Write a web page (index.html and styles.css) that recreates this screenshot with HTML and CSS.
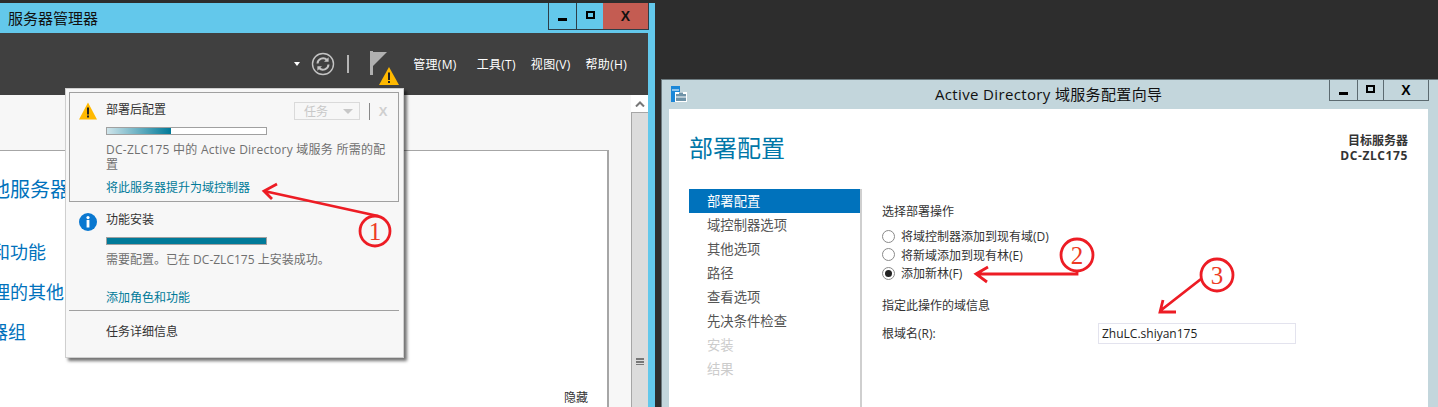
FILE: index.html
```html
<!DOCTYPE html>
<html lang="zh-CN">
<head>
  <meta charset="UTF-8">
  <title>服务器管理器</title>
  <link rel="stylesheet" href="styles.css">
</head>
<body>
  <!-- server manager window -->
  <div class="win win-left">
    <div class="titlebar">
      <div class="title">服务器管理器</div>
      <div class="win-btns">
        <div class="win-btn btn-min"><span class="glyph-min"></span></div>
        <div class="win-btn btn-max"><span class="glyph-max"></span></div>
        <div class="win-btn btn-close">X</div>
      </div>
    </div>
    <div class="toolbar">
      <span class="drop-arrow"></span>
      <svg class="refresh" width="24" height="24" viewBox="0 0 24 24" fill="none" stroke="#c4c4c4">
        <circle cx="12" cy="12" r="10.5" stroke-width="1.4"/>
        <path d="M6.5 11.5a5.5 5.5 0 0 1 9.5-3.5" stroke-width="2"/>
        <path d="M17.5 12.5a5.5 5.5 0 0 1-9.5 3.5" stroke-width="2"/>
        <path d="M17.6 5.2v4.6h-4.6z" fill="#c4c4c4" stroke="none"/>
        <path d="M6.4 18.8v-4.6h4.6z" fill="#c4c4c4" stroke="none"/>
      </svg>
      <span class="tool-sep"></span>
      <span class="flag-wrap">
        <svg width="30" height="36" viewBox="0 0 30 36">
          <rect x="1" y="0" width="3" height="24" fill="#b0b0b0"/>
          <path d="M4 1H18L4 15z" fill="#b0b0b0"/>
          <path d="M20 16L30 34H10z" fill="#ffb900"/>
          <rect x="19" y="21.5" width="2" height="7.5" fill="#222"/>
          <rect x="19" y="30" width="2" height="2" fill="#222"/>
        </svg>
      </span>
      <nav class="menu">
        <span class="menu-m">管理(M)</span>
        <span class="menu-t">工具(T)</span>
        <span class="menu-v">视图(V)</span>
        <span>帮助(H)</span>
      </nav>
    </div>
    <div class="left-body">
      <div class="left-main">
        <div class="panel">
          <div class="panel-big">他服务器</div>
          <div class="panel-link link-a">和功能</div>
          <div class="panel-link link-b">理的其他</div>
          <div class="panel-link link-c">器组</div>
          <div class="panel-hide">隐藏</div>
        </div>
      </div>
      <div class="scrollbar">
        <div class="scroll-up">
          <svg width="10" height="6" viewBox="0 0 10 6" fill="none" stroke="#777" stroke-width="2"><path d="M1 5.5L5 1.5l4 4"/></svg>
        </div>
        <div class="scroll-track"><span class="grip"></span></div>
      </div>
    </div>
  </div>

  <!-- notification popup -->
  <div class="popup">
    <div class="note note-active">
      <div class="note-head">
        <svg class="note-icon" width="18" height="18" viewBox="0 0 18 18">
          <path d="M9 0.5L18 17.5H0z" fill="#ffb900"/>
          <rect x="8" y="5.5" width="2" height="7" fill="#222"/>
          <rect x="8" y="13.5" width="2" height="2" fill="#222"/>
        </svg>
        <span class="note-title">部署后配置</span>
        <span class="task-btn">任务<i class="task-arrow"></i></span>
        <span class="note-sep"></span>
        <span class="note-x">X</span>
      </div>
      <div class="bar"><div class="bar-fill fill-part"></div></div>
      <p class="note-text note-text-wide">DC-ZLC175 中的 Active Directory 域服务 所需的配置</p>
      <a class="note-link link-promote">将此服务器提升为域控制器</a>
    </div>
    <div class="note note-second">
      <div class="note-head">
        <svg class="note-icon" width="18" height="18" viewBox="0 0 18 18">
          <circle cx="9" cy="9" r="9" fill="#0a78d0"/>
          <rect x="7.6" y="7" width="2.8" height="7.5" fill="#fff"/>
          <circle cx="9" cy="4.6" r="1.6" fill="#fff"/>
        </svg>
        <span class="note-title">功能安装</span>
      </div>
      <div class="bar"><div class="bar-fill fill-full"></div></div>
      <p class="note-text">需要配置。已在 DC-ZLC175 上安装成功。</p>
      <a class="note-link link-add">添加角色和功能</a>
    </div>
    <div class="note-foot">任务详细信息</div>
  </div>

  <!-- AD DS wizard window -->
  <div class="win win-right">
    <div class="wiz-titlebar">
      <svg class="wiz-icon" width="16" height="16" viewBox="0 0 16 16">
        <rect x="0" y="0" width="9" height="16" fill="#1b87d8"/>
        <rect x="1" y="3.5" width="7" height="1" fill="#fff"/>
        <rect x="4" y="6" width="12" height="10" fill="#fff"/>
        <rect x="5" y="8" width="10" height="7" fill="#6f93a8"/>
        <rect x="8" y="6.5" width="4" height="1.5" fill="#6f93a8"/>
        <rect x="5" y="10.5" width="10" height="1" fill="#fff"/>
      </svg>
      <div class="wiz-title">Active Directory 域服务配置向导</div>
      <div class="wiz-btns">
        <div class="wiz-btn wiz-min"><span class="glyph-min"></span></div>
        <div class="wiz-btn wiz-max"><span class="glyph-max"></span></div>
        <div class="wiz-btn wiz-close">X</div>
      </div>
    </div>
    <div class="wiz-pane">
      <div class="wiz-head">
        <div class="wiz-heading">部署配置</div>
        <div class="wiz-target">
          <div>目标服务器</div>
          <div class="wiz-server">DC-ZLC175</div>
        </div>
      </div>
      <div class="wiz-body">
        <ul class="steps">
          <li class="step step-on">部署配置</li>
          <li class="step">域控制器选项</li>
          <li class="step">其他选项</li>
          <li class="step">路径</li>
          <li class="step">查看选项</li>
          <li class="step">先决条件检查</li>
          <li class="step step-off">安装</li>
          <li class="step step-off">结果</li>
        </ul>
        <div class="form">
          <div class="form-label">选择部署操作</div>
          <div class="radios">
            <div class="radio-row"><span class="radio"></span>将域控制器添加到现有域(D)</div>
            <div class="radio-row"><span class="radio"></span>将新域添加到现有林(E)</div>
            <div class="radio-row"><span class="radio radio-on"></span>添加新林(F)</div>
          </div>
          <div class="form-label form-label-2">指定此操作的域信息</div>
          <div class="field">
            <label class="field-label">根域名(R):</label>
            <div class="field-input">ZhuLC.shiyan175</div>
          </div>
        </div>
      </div>
    </div>
  </div>

  <!-- red annotations drawn on top of the screenshot -->
  <svg class="marks" width="1438" height="407" viewBox="0 0 1438 407" fill="none" stroke="#ed1c24" stroke-width="2.8">
    <path d="M378 216L264 191M277 184L264 191L272 199"/>
    <circle cx="375" cy="231" r="15"/>
    <text x="375" y="240" class="mark-num">1</text>
    <path d="M1077 271V274H976M988 267L976 274L987 282"/>
    <circle cx="1077" cy="255" r="16"/>
    <text x="1077" y="264" class="mark-num">2</text>
    <path d="M1201 279L1160 311M1163 300L1160 312L1176 312"/>
    <circle cx="1217" cy="275" r="16"/>
    <text x="1217" y="284" class="mark-num">3</text>
  </svg>
</body>
</html>
```

FILE: styles.css
```css
html, body {
  margin: 0;
  height: 100%;
  overflow: hidden;
}
body {
  position: relative;
  background-color: #2d2d2d;
  font-family: "Open Sans", "Noto Sans CJK SC", sans-serif;
  font-size: 12px;
  color: #333;
}
.win {
  position: absolute;
  box-sizing: border-box;
  display: flex;
  flex-direction: column;
}

/* left window */
.win-left {
  left: 0;
  top: 3px;
  width: 655px;
  height: 404px;
  background-color: #63c8eb;
}
.titlebar {
  display: flex;
  justify-content: space-between;
  height: 30px;
  flex: none;
}
.title {
  padding-left: 8px;
  font-size: 15px;
  line-height: 30px;
  color: #111;
}
.win-btns {
  display: flex;
  height: 27px;
  margin-right: 6px;
  border: 1px solid #2d3e48;
  border-top: none;
  box-sizing: border-box;
}
.win-btn {
  display: flex;
  align-items: center;
  justify-content: center;
  height: 100%;
  font: bold 14px "Liberation Sans", sans-serif;
  color: #111;
}
.btn-min {
  width: 27px;
  border-right: 1px solid #2d3e48;
}
.btn-max {
  width: 26px;
}
.btn-close {
  width: 45px;
  background-color: #c45c52;
}
.glyph-min {
  display: block;
  width: 9px;
  height: 3px;
  margin-top: 6px;
  background-color: #000;
}
.glyph-max {
  display: block;
  box-sizing: border-box;
  width: 9px;
  height: 8px;
  border: 2px solid #000;
  margin-bottom: 2px;
}
.toolbar {
  display: flex;
  align-items: center;
  height: 62px;
  flex: none;
  margin-right: 7px;
  padding-right: 21px;
  justify-content: flex-end;
  background-color: #404040;
  color: #fff;
}
.drop-arrow {
  width: 0;
  height: 0;
  margin-right: 11px;
  border-left: 3px solid transparent;
  border-right: 3px solid transparent;
  border-top: 4px solid #fff;
}
.refresh {
  margin-right: 12px;
}
.tool-sep {
  width: 2px;
  height: 18px;
  margin-right: 20px;
  background-color: #b5b5b5;
}
.flag-wrap {
  display: flex;
  height: 36px;
  margin-right: 14px;
  margin-top: 9px;
}
.menu {
  display: flex;
  gap: 15px;
  letter-spacing: .3px;
}
.menu-m {
  margin-right: 5px;
}

.left-body {
  display: flex;
  flex: 1;
  min-height: 0;
  margin-right: 7px;
  background-color: #f7f7f7;
}
.left-main {
  flex: 1;
  padding-top: 55px;
  min-width: 0;
}
.panel {
  box-sizing: border-box;
  position: relative;
  width: 609px;
  height: 257px;
  overflow: hidden;
  background-color: #fff;
  border-top: 1px solid #a6a6a6;
  border-right: 2px solid #a6a6a6;
  color: #0072bc;
}
.panel-big {
  margin: 27px 0 0 -10px;
  font-size: 20px;
  line-height: 24px;
}
.panel-link {
  font-size: 18px;
  line-height: 24px;
  white-space: nowrap;
}
.link-a {
  margin: 38px 0 0 -8px;
}
.link-b {
  margin: 16px 0 0 -8px;
}
.link-c {
  margin: 16px 0 0 -10px;
}
.panel-hide {
  margin: 46px 19px 0 0;
  text-align: right;
  font-size: 12px;
  line-height: 16px;
  color: #333;
}
.scrollbar {
  display: flex;
  flex-direction: column;
  width: 17px;
  flex: none;
}
.scroll-up {
  display: flex;
  align-items: center;
  justify-content: center;
  height: 17px;
  background-color: #fff;
}
.scroll-track {
  box-sizing: border-box;
  position: relative;
  flex: 1;
  background-color: #dcdcdc;
  border: 1px solid #a6a6a6;
  border-bottom: none;
  border-right: none;
}
.grip {
  position: absolute;
  left: 4px;
  top: 245px;
  width: 8px;
  height: 7px;
  background: repeating-linear-gradient(#777 0 1.5px, #dcdcdc 1.5px 3px);
}

/* popup */
.popup {
  position: absolute;
  left: 65px;
  top: 88px;
  box-sizing: border-box;
  width: 339px;
  height: 270px;
  padding: 3px 4px 0 3px;
  background-color: #f7f7f7;
  border: 1px solid #cfcfcf;
  box-shadow: 3px 3px 3px rgba(0, 0, 0, .55);
}
.note {
  box-sizing: border-box;
  padding: 9px 7px 0 9px;
}
.note-active {
  height: 110px;
  border: 1px solid #a0a0a0;
}
.note-second {
  height: 109px;
  padding: 11px 7px 0 10px;
  border-bottom: 1px solid #a0a0a0;
}
.note-head {
  display: flex;
  align-items: center;
  height: 18px;
}
.note-icon {
  flex: none;
  margin-right: 9px;
}
.note-title {
  flex: 1;
  padding-bottom: 2px;
  color: #333;
  line-height: 16px;
}
.note-second .note-title {
  padding-bottom: 4px;
}
.task-btn {
  box-sizing: border-box;
  display: flex;
  align-items: center;
  justify-content: space-between;
  width: 66px;
  height: 18px;
  padding: 0 6px 0 9px;
  border: 1px solid #dadada;
  color: #c8c8c8;
}
.task-arrow {
  width: 0;
  height: 0;
  border-left: 5px solid transparent;
  border-right: 5px solid transparent;
  border-top: 5px solid #c8c8c8;
}
.note-sep {
  width: 1px;
  height: 17px;
  margin: 0 5px 0 9px;
  background-color: #888;
}
.note-x {
  width: 16px;
  text-align: center;
  font: bold 13px "Liberation Sans", sans-serif;
  color: #cfcfcf;
}
.bar {
  box-sizing: border-box;
  width: 161px;
  height: 8px;
  margin: 6px 0 0 27px;
  background-color: #fff;
  border: 1px solid #a0a0a0;
}
.note-active .bar {
  margin-top: 7px;
}
.bar-fill {
  height: 100%;
}
.fill-part {
  width: 64px;
  background: linear-gradient(to right, #cfe4ea, #007a99);
}
.fill-full {
  width: 100%;
  background-color: #007a99;
}
.note-text {
  margin: 7px 0 0 27px;
  font-size: 12px;
  line-height: 15px;
  color: #707070;
}
.note-text-wide {
  max-width: 285px;
  letter-spacing: .25px;
}
.note-link {
  display: block;
  margin-left: 27px;
  line-height: 16px;
  color: #007a99;
}
.link-promote {
  margin-top: 8px;
}
.link-add {
  margin-top: 23px;
}
.note-foot {
  padding: 13px 0 0 37px;
  line-height: 16px;
  color: #333;
}

/* wizard window */
.win-right {
  left: 661px;
  top: 79px;
  width: 777px;
  height: 328px;
  padding-left: 7px;
  background-color: #c3d6dc;
  border-left: 1px solid #6d7b80;
  border-top: 1px solid #6d7b80;
}
.wiz-titlebar {
  position: relative;
  display: flex;
  align-items: flex-start;
  height: 29px;
  flex: none;
}
.wiz-icon {
  margin: 6px 0 0 2px;
}
.wiz-title {
  margin: 4px 0 0 248px;
  font-size: 15px;
  line-height: 21px;
  letter-spacing: .35px;
  color: #111;
}
.wiz-btns {
  display: flex;
  margin-left: auto;
  margin-right: 9px;
  height: 21px;
  border: 1px solid #5c6a70;
  border-top: none;
  box-sizing: border-box;
}
.wiz-btn {
  display: flex;
  align-items: center;
  justify-content: center;
  box-sizing: border-box;
  height: 100%;
  font: bold 14px "Liberation Sans", sans-serif;
  color: #000;
}
.wiz-min {
  width: 28px;
  border-right: 1px solid #5c6a70;
}
.wiz-max {
  width: 26px;
  border-right: 1px solid #5c6a70;
}
.wiz-close {
  width: 44px;
}
.wiz-pane {
  display: flex;
  flex-direction: column;
  flex: 1;
  min-height: 0;
  margin-right: 10px;
  background-color: #fff;
}
.wiz-head {
  display: flex;
  justify-content: space-between;
  align-items: flex-start;
  height: 80px;
  flex: none;
  padding: 0 20px 0 20px;
}
.wiz-heading {
  margin-top: 22px;
  font-size: 24px;
  line-height: 34px;
  color: #0077a8;
}
.wiz-target {
  margin-top: 24px;
  text-align: right;
  font-weight: 700;
  line-height: 15px;
  color: #333;
}
.wiz-server {
  letter-spacing: .6px;
}
.wiz-body {
  display: flex;
  flex: 1;
  min-height: 0;
}
.steps {
  box-sizing: border-box;
  flex: none;
  width: 173px;
  margin: 0 0 0 20px;
  padding: 0;
  list-style: none;
  border-right: 2px solid #cfcfcf;
}
.step {
  height: 24px;
  padding-left: 18px;
  font-size: 13.33px;
  line-height: 24px;
  color: #555;
}
.step-on {
  background-color: #0072bc;
  color: #fff;
}
.step-off {
  color: #ccc;
}
.form {
  flex: 1;
  padding: 14px 0 0 20px;
}
.form-label {
  line-height: 18px;
  color: #333;
}
.radios {
  margin-top: 6px;
}
.radio-row {
  display: flex;
  align-items: center;
  height: 18.5px;
  color: #333;
}
.radio {
  box-sizing: border-box;
  position: relative;
  width: 13px;
  height: 13px;
  margin-right: 6px;
  background-color: #fff;
  border: 1px solid #8a8a8a;
  border-radius: 50%;
}
.radio-on::after {
  content: "";
  position: absolute;
  left: 2px;
  top: 2px;
  width: 7px;
  height: 7px;
  background-color: #222;
  border-radius: 50%;
}
.form-label-2 {
  margin-top: 14px;
}
.field {
  display: flex;
  align-items: center;
  margin-top: 8px;
}
.field-label {
  width: 216px;
  flex: none;
  color: #333;
}
.field-input {
  box-sizing: border-box;
  width: 198px;
  height: 21px;
  padding-left: 3px;
  font-size: 12px;
  line-height: 19px;
  background-color: #fff;
  border: 1px solid #e3e3ee;
  color: #222;
}

/* annotations */
.marks {
  position: absolute;
  left: 0;
  top: 0;
}
.mark-num {
  font-family: "Liberation Serif", serif;
  font-size: 25px;
  fill: #ed3a24;
  stroke: none;
  text-anchor: middle;
}
```
